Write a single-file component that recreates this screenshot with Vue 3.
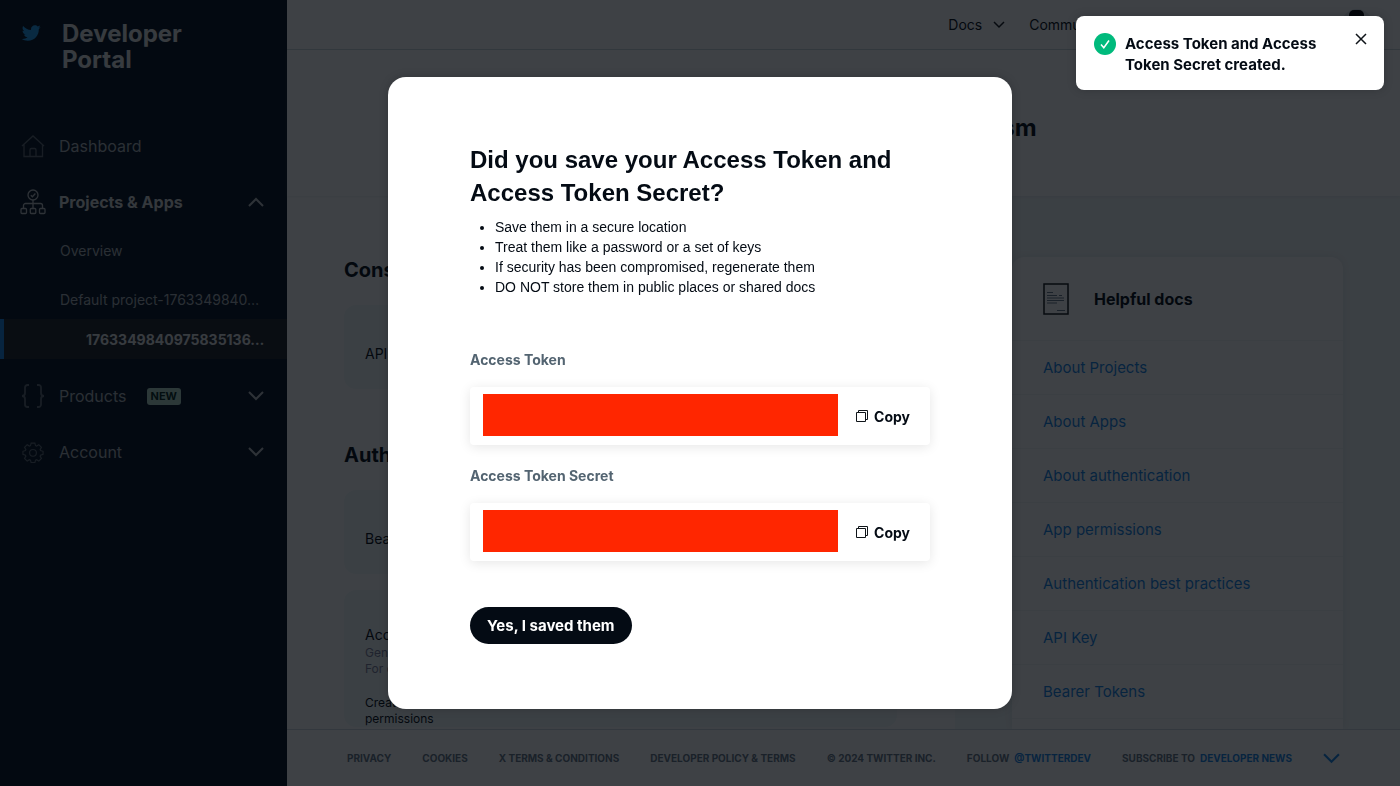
<script setup>
import { ref } from "vue";

const docs = [
  "About Projects",
  "About Apps",
  "About authentication",
  "App permissions",
  "Authentication best practices",
  "API Key",
  "Bearer Tokens",
];

const tips = [
  "Save them in a secure location",
  "Treat them like a password or a set of keys",
  "If security has been compromised, regenerate them",
  "DO NOT store them in public places or shared docs",
];

const tokens = ["Access Token", "Access Token Secret"];

const footerLinks = [
  "Privacy",
  "Cookies",
  "X Terms & Conditions",
  "Developer Policy & Terms",
];

const showModal = ref(true);
const showToast = ref(true);
</script>

<template>
  <div class="page">
    <aside class="sidebar">
      <a href="#" class="brand">
        <svg class="bird" viewBox="0 0 24 24">
          <path
            d="M23.643 4.937c-.835.37-1.732.62-2.675.733.962-.576 1.7-1.49 2.048-2.578-.9.534-1.897.922-2.958 1.13-.85-.904-2.06-1.47-3.4-1.47-2.572 0-4.658 2.086-4.658 4.66 0 .364.042.718.12 1.06-3.873-.195-7.304-2.05-9.602-4.868-.4.69-.63 1.49-.63 2.342 0 1.616.823 3.043 2.072 3.878-.764-.025-1.482-.234-2.11-.583v.06c0 2.257 1.605 4.14 3.737 4.568-.392.106-.803.162-1.227.162-.3 0-.593-.028-.877-.082.593 1.85 2.313 3.198 4.352 3.234-1.595 1.25-3.604 1.995-5.786 1.995-.376 0-.747-.022-1.112-.065 2.062 1.323 4.51 2.093 7.14 2.093 8.57 0 13.255-7.098 13.255-13.254 0-.2-.005-.402-.014-.602.91-.658 1.7-1.477 2.323-2.41z"
          />
        </svg>
        <span>Developer<br />Portal</span>
      </a>
      <nav>
        <a href="#" class="item">
          <svg class="item-icon" viewBox="0 0 26 26">
            <path d="M2 13 13 3l11 10M4 11.500V23.500h18.500V11.500M10 23.500V17a1.500 1.500 0 0 1 1.500-1.500h3a1.500 1.500 0 0 1 1.500 1.500v6.500" />
          </svg>
          <span>Dashboard</span>
        </a>
        <a href="#" class="item open">
          <svg class="item-icon" viewBox="0 0 26 26">
            <circle cx="13" cy="6" r="5" />
            <path d="m10.800 6.200 1.600 1.600 3-3.300M13 11v8M3.500 19v-2.500a2 2 0 0 1 2-2h15a2 2 0 0 1 2 2V19" />
            <rect x="1" y="19.500" width="5.500" height="5" rx="1" />
            <rect x="10.300" y="19.500" width="5.500" height="5" rx="1" />
            <rect x="19.500" y="19.500" width="5.500" height="5" rx="1" />
          </svg>
          <span>Projects &amp; Apps</span>
          <svg class="chevron" viewBox="0 0 16 10"><path d="m1 9 7-7 7 7" /></svg>
        </a>
        <a href="#" class="sub">Overview</a>
        <a href="#" class="sub project">Default project-1763349840…</a>
        <a href="#" class="sub active">1763349840975835136…</a>
        <a href="#" class="item">
          <svg class="item-icon braces" viewBox="0 0 26 26">
            <path d="M9 2H7.500A2.500 2.500 0 0 0 5 4.500v5.500c0 2-1 3-3 3 2 0 3 1 3 3v5.500A2.500 2.500 0 0 0 7.500 24H9M17 2h1.500A2.500 2.500 0 0 1 21 4.500v5.500c0 2 1 3 3 3-2 0-3 1-3 3v5.500a2.500 2.500 0 0 1-2.500 2.500H17" />
          </svg>
          <span>Products</span>
          <em class="badge">NEW</em>
          <svg class="chevron" viewBox="0 0 16 10"><path d="m1 1 7 7 7-7" /></svg>
        </a>
        <a href="#" class="item">
          <svg class="item-icon gear" viewBox="0 0 26 26">
            <path d="M10.800 2.500h4.400l.8 3 1.200.5 2.700-1.600 3.100 3.100-1.600 2.700.5 1.200 3 .8v3.600l-3 .9-.5 1.200 1.600 2.700-3.100 3.100-2.700-1.600-1.200.5-.8 3h-4.400l-.8-3-1.200-.5-2.700 1.600L3 20.600l1.600-2.700-.5-1.200-3-.9v-3.600l3-.8.5-1.200L3 7.500l3.100-3.100L8.800 6l1.200-.5z" />
            <circle cx="13" cy="14" r="4" />
          </svg>
          <span>Account</span>
          <svg class="chevron" viewBox="0 0 16 10"><path d="m1 1 7 7 7-7" /></svg>
        </a>
      </nav>
    </aside>

    <div class="main">
      <header class="topbar">
        <a href="#">Docs</a>
        <svg class="small-chevron" viewBox="0 0 12 8"><path d="m1 1 5 5 5-5" /></svg>
        <a href="#" class="community">Community</a>
        <svg class="small-chevron" viewBox="0 0 12 8"><path d="m1 1 5 5 5-5" /></svg>
        <svg class="avatar" viewBox="0 0 32 32">
          <circle cx="16" cy="16" r="16" fill="#e1e8ed" />
          <rect x="8" y="1" width="15" height="17" rx="5" fill="#000" />
        </svg>
      </header>
      <div class="title-band">
        <h1>176334984097583513devtprism</h1>
      </div>
      <div class="content">
        <section class="keys">
          <h2>Consumer Keys</h2>
          <div class="card">
            <p class="card-title">API Key and Secret</p>
          </div>
          <h2 class="second">Authentication Tokens</h2>
          <div class="card">
            <p class="card-title">Bearer Token</p>
          </div>
          <div class="card access">
            <p class="card-title">Access Token and Secret</p>
            <p class="muted">Generated today<br />For developer</p>
            <p class="created">Created<br />permissions</p>
          </div>
        </section>
        <section class="helpful">
          <div class="docs">
            <div class="docs-head">
              <svg class="doc-icon" viewBox="0 0 26 32">
                <rect x="1" y="1" width="24" height="30" fill="none" stroke="#0f1419" stroke-width="1.500" />
                <path d="M4 9.500h6M4 12.500h10m2 0h3M4 15h17M4 17.500h17M4 20h10M14 27.500h8" stroke="#657786" />
              </svg>
              <h3>Helpful docs</h3>
            </div>
            <a v-for="doc in docs" :key="doc" href="#" class="doc-link">{{ doc }}</a>
          </div>
        </section>
      </div>
      <footer>
        <a v-for="link in footerLinks" :key="link" href="#">{{ link }}</a>
        <span>© 2024 Twitter Inc.</span>
        <span class="pair">Follow <a href="#" class="blue">@TwitterDev</a></span>
        <span class="pair">Subscribe to <a href="#" class="blue">Developer News</a></span>
        <svg class="footer-chevron" viewBox="0 0 16 10"><path d="m1 1 7 7 7-7" /></svg>
      </footer>
    </div>
  </div>

  <div v-if="showModal" class="overlay">
    <div class="modal" role="dialog" aria-modal="true">
      <h2>Did you save your Access Token and Access Token Secret?</h2>
      <ul>
        <li v-for="tip in tips" :key="tip">{{ tip }}</li>
      </ul>
      <div v-for="token in tokens" :key="token" class="token">
        <h3>{{ token }}</h3>
        <div class="token-box">
          <div class="redacted"></div>
          <button type="button" class="copy">
            <svg viewBox="0 0 14 14">
              <path d="M1.500 3.500h9v9h-9zM3.500 3.500v-2h9v9h-2" />
            </svg>
            Copy
          </button>
        </div>
      </div>
      <button type="button" class="confirm" @click="showModal = false">
        Yes, I saved them
      </button>
    </div>
  </div>

  <div v-if="showToast" class="toast" role="status">
    <svg class="check" viewBox="0 0 22 22">
      <circle cx="11" cy="11" r="11" fill="#00ba7c" />
      <path d="m7 11.500 2.800 3.300L15 7.500" fill="none" stroke="#fff" stroke-width="1.500" />
    </svg>
    <p>Access Token and Access Token Secret created.</p>
    <button type="button" class="close" aria-label="Close" @click="showToast = false">
      <svg viewBox="0 0 12 12"><path d="m1 1 10 10M11 1 1 11" /></svg>
    </button>
  </div>
</template>

<style>
body {
  margin: 0;
  font-family: Inter, "Liberation Sans", sans-serif;
  color: #040b14;
}
</style>

<style scoped>
* {
  box-sizing: border-box;
}
h1,
h2,
h3,
p,
ul {
  margin: 0;
}
a {
  color: inherit;
  text-decoration: none;
}
button {
  border: 0;
  padding: 0;
  background: none;
  font: inherit;
  color: inherit;
  cursor: pointer;
}
svg {
  flex: none;
}

.page {
  display: flex;
  height: 100vh;
  overflow: hidden;
}

/* sidebar */
.sidebar {
  flex: none;
  width: 287px;
  background: #04111f;
  color: #a9b0b8;
}
.brand {
  display: flex;
  gap: 21px;
  height: 118px;
  padding: 21px 21px 0;
  font-size: 24px;
  font-weight: 700;
  line-height: 26px;
  color: #e2e4e6;
}
.bird {
  width: 20px;
  height: 24px;
  fill: #1d9bf0;
}
.item {
  display: flex;
  align-items: center;
  height: 56px;
  padding: 0 23px 0 20px;
  font-size: 16px;
}
.item-icon {
  width: 26px;
  height: 26px;
  margin-right: 13px;
  fill: none;
  stroke: #5b6672;
  stroke-width: 1.3;
}
.braces {
  stroke-width: 1.8;
}
.gear {
  padding: 2px;
}
.open {
  font-weight: 700;
  color: #d3d6d9;
}
.open .item-icon {
  stroke: #b9bec4;
}
.chevron {
  width: 16px;
  height: 10px;
  margin-left: auto;
  fill: none;
  stroke: #b9bec4;
  stroke-width: 2;
}
.badge {
  margin-left: 20px;
  padding: 0 4px;
  border-radius: 3px;
  background: #b3d9c8;
  color: #04261c;
  font-size: 11px;
  font-style: normal;
  font-weight: 700;
  line-height: 17px;
}
.sub {
  display: flex;
  align-items: center;
  height: 40px;
  padding-left: 60px;
  font-size: 14px;
}
.project {
  margin-top: 9px;
}
.active {
  margin-bottom: 9px;
  padding-left: 82px;
  border-left: 4px solid #1484e6;
  background: #1a1e24;
  color: #e2e4e6;
  font-weight: 700;
}

/* page behind the dialog */
.main {
  display: flex;
  flex: 1;
  flex-direction: column;
  min-width: 0;
  background: #fff;
}
.topbar {
  display: flex;
  flex: none;
  align-items: center;
  justify-content: flex-end;
  height: 50px;
  padding-right: 27px;
  border-bottom: 1px solid #cfd9de;
  font-size: 14px;
}
.small-chevron {
  width: 12px;
  height: 8px;
  margin-left: 11px;
  fill: none;
  stroke: #0f1419;
  stroke-width: 1.5;
}
.community {
  margin-left: 24px;
}
.avatar {
  width: 32px;
  height: 32px;
  margin-left: 213px;
}
.title-band {
  display: flex;
  flex: none;
  align-items: center;
  justify-content: center;
  height: 146px;
  padding-top: 10px;
  z-index: 1;
  box-shadow: 0 1px 3px rgba(101, 119, 134, 0.12);
}
.title-band h1 {
  font-size: 24px;
  line-height: 32px;
}
.content {
  display: flex;
  flex: 1;
  min-height: 0;
  overflow: hidden;
}
.keys {
  flex: 1;
  padding: 61px 58px 0 57px;
}
.keys h2 {
  margin-bottom: 22px;
  font-size: 20px;
  line-height: 26px;
}
.keys .second {
  margin-top: 53px;
}
.card {
  min-height: 84px;
  margin-bottom: 16px;
  padding: 38px 21px 0;
  border-radius: 12px;
  background: #f3f9f9;
}
.access {
  padding-top: 34px;
}
.card-title {
  font-size: 14px;
  line-height: 21px;
}
.muted,
.created {
  font-size: 12px;
  line-height: 16px;
}
.muted {
  color: #7c7f9c;
}
.created {
  margin-top: 18px;
}
.helpful {
  flex: none;
  width: 445px;
  padding: 61px 57px 0;
  background: #f3f9f9;
}
.docs {
  min-height: 100%;
  border-radius: 12px 12px 0 0;
  background: #fff;
  box-shadow: 0 0 10px rgba(101, 119, 134, 0.15);
}
.docs-head {
  display: flex;
  align-items: center;
  gap: 25px;
  height: 83px;
  padding-left: 31px;
}
.docs-head h3 {
  font-size: 16px;
}
.doc-icon {
  width: 26px;
  height: 32px;
}
.doc-link {
  display: flex;
  align-items: center;
  height: 54px;
  padding-left: 31px;
  border-top: 1px solid #f2f5f6;
  font-size: 15px;
  color: #1484e6;
}
.doc-link:last-child {
  height: 55px;
  border-bottom: 1px solid #f2f5f6;
}
footer {
  display: flex;
  flex: none;
  align-items: center;
  gap: 31px;
  height: 57px;
  padding-left: 60px;
  border-top: 1px solid #cfd9de;
  background: #fff;
  font-size: 10px;
  font-weight: 700;
  color: #657786;
  text-transform: uppercase;
  white-space: nowrap;
}
.pair {
  display: flex;
  gap: 5px;
}
.blue {
  color: #1484e6;
}
.footer-chevron {
  width: 17px;
  height: 11px;
  fill: none;
  stroke: #1484e6;
  stroke-width: 2;
}

/* dialog */
.overlay {
  position: fixed;
  inset: 0;
  z-index: 2;
  display: flex;
  align-items: center;
  justify-content: center;
  background: rgba(4, 8, 13, 0.77);
}
.modal {
  width: 624px;
  max-width: 100%;
  padding: 66px 82px 65px;
  border-radius: 18px;
  background: #fff;
  box-shadow: 0 0 10px rgba(0, 0, 0, 0.2);
}
.modal h2 {
  font-family: "Liberation Sans", Arial, sans-serif;
  font-size: 24px;
  line-height: 33px;
}
.modal ul {
  margin: 8px 0 53px;
  padding-left: 25px;
  font-family: "Liberation Sans", Arial, sans-serif;
  font-size: 14px;
  line-height: 20px;
}
.token {
  margin-bottom: 21px;
}
.token h3 {
  margin-bottom: 17px;
  font-size: 14px;
  line-height: 20px;
  color: #536471;
}
.token-box {
  display: flex;
  align-items: center;
  justify-content: space-between;
  height: 58px;
  padding: 0 20px 2px 13px;
  border-radius: 4px;
  box-shadow: 0 2px 12px rgba(0, 0, 0, 0.1);
}
.redacted {
  width: 355px;
  height: 42px;
  background: #ff2600;
}
.copy {
  display: flex;
  align-items: center;
  gap: 5px;
  padding-top: 2px;
  font-size: 14px;
  font-weight: 700;
}
.copy svg {
  width: 14px;
  height: 14px;
  fill: none;
  stroke: #0f1419;
}
.confirm {
  height: 37px;
  margin-top: 25px;
  padding: 0 17px;
  border-radius: 19px;
  background: #040b14;
  color: #fff;
  font-size: 15px;
  font-weight: 700;
}

/* toast */
.toast {
  position: fixed;
  top: 16px;
  right: 16px;
  z-index: 3;
  display: flex;
  align-items: flex-start;
  width: 308px;
  padding: 17px 17px 15px 18px;
  border-radius: 8px;
  background: #fff;
  box-shadow: 0 0 10px rgba(0, 0, 0, 0.2);
}
.check {
  width: 22px;
  height: 22px;
}
.toast p {
  flex: 1;
  margin: 0 30px 0 9px;
  font-size: 15px;
  font-weight: 700;
  line-height: 21px;
}
.close svg {
  display: block;
  width: 12px;
  height: 12px;
  fill: none;
  stroke: #0f1419;
  stroke-width: 1.5;
}
</style>
